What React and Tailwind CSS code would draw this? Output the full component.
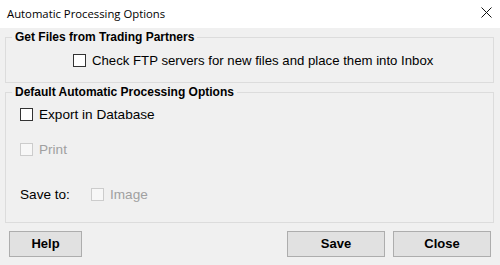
import React from "react";

const Checkbox = ({ disabled }) => (
  <span
    className={
      "inline-block w-[13px] h-[13px] shrink-0 border " +
      (disabled ? "border-[#cccccc] bg-[#f7f7f7]" : "border-[#333333] bg-white")
    }
  />
);

const Group = ({ title, className, children }) => (
  <fieldset className={"ml-[5px] w-[489px] border border-[#dcdcdc] " + className}>
    <legend className="ml-[6px] px-[3px] text-[12px] leading-[14px] font-bold text-black">
      {title}
    </legend>
    {children}
  </fieldset>
);

const Button = ({ children, className }) => (
  <button
    className={
      "h-[26px] border border-[#adadad] bg-[#e1e1e1] text-[13px] font-bold text-black " + className
    }
  >
    {children}
  </button>
);

export default function App() {
  return (
    <div
      className="w-[500px] h-[265px] bg-[#f0f0f0] overflow-hidden"
      style={{ fontFamily: '"Liberation Sans", Arial, sans-serif' }}
    >
      <div className="h-[28px] bg-white flex items-center justify-between pl-[7px] pr-[8px]">
        <span className="text-[11.3px] text-black" style={{ fontFamily: '"Open Sans", "Noto Sans", sans-serif' }}>
          Automatic Processing Options
        </span>
        <svg width="11" height="11" viewBox="0 0 11 11" className="mb-[3px]">
          <path d="M0.5 0.5 L10.5 10.5 M10.5 0.5 L0.5 10.5" stroke="#111" strokeWidth="1" />
        </svg>
      </div>

      <Group title="Get Files from Trading Partners" className="mt-[2px] h-[53px]">
        <div className="mt-[10px] pl-[67px] flex items-center gap-[6px] h-[13px]">
          <Checkbox />
          <span className="text-[13.2px] leading-[13px] text-black">
            Check FTP servers for new files and place them into Inbox
          </span>
        </div>
      </Group>

      <Group title="Default Automatic Processing Options" className="mt-[2px] h-[138px]">
        <div className="mt-[9px] pl-[14px] flex flex-col">
          <div className="flex items-center gap-[6px] h-[13px]">
            <Checkbox />
            <span className="text-[13.6px] leading-[13px] text-black">Export in Database</span>
          </div>
          <div className="mt-[22px] flex items-center gap-[6px] h-[13px]">
            <Checkbox disabled />
            <span className="text-[13.6px] leading-[13px] text-[#a0a0a0]">Print</span>
          </div>
          <div className="mt-[32px] flex items-center h-[13px]">
            <span className="w-[71px] text-[13.6px] leading-[13px] text-black">Save to:</span>
            <Checkbox disabled />
            <span className="ml-[6px] text-[13.6px] leading-[13px] text-[#a0a0a0]">Image</span>
          </div>
        </div>
      </Group>

      <div className="mt-[8px] flex pl-[9px]">
        <Button className="w-[73px]">Help</Button>
        <Button className="ml-[205px] w-[98px]">Save</Button>
        <Button className="ml-[8px] w-[98px]">Close</Button>
      </div>
    </div>
  );
}
